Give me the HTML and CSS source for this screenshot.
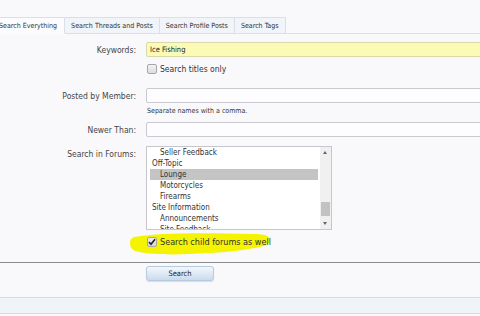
FILE: index.html
```html
<!DOCTYPE html>
<html>
<head>
<meta charset="utf-8">
<link rel="stylesheet" href="styles.css">
</head>
<body>
<div class="page">
  <ul class="tabs">
    <li class="tab active">Search Everything</li>
    <li class="tab">Search Threads and Posts</li>
    <li class="tab">Search Profile Posts</li>
    <li class="tab">Search Tags</li>
  </ul>

  <div class="form">
    <div class="row r-keywords">
      <div class="label">Keywords:</div>
      <div class="ctrl">
        <div class="input yellow">Ice Fishing</div>
        <div class="check"><span class="box"></span>Search titles only</div>
      </div>
    </div>

    <div class="row r-member">
      <div class="label">Posted by Member:</div>
      <div class="ctrl">
        <div class="input"></div>
        <div class="explain">Separate names with a comma.</div>
      </div>
    </div>

    <div class="row r-newer">
      <div class="label">Newer Than:</div>
      <div class="ctrl">
        <div class="input"></div>
      </div>
    </div>

    <div class="row r-forums">
      <div class="label">Search in Forums:</div>
      <div class="ctrl">
        <div class="listbox">
          <div class="items">
            <div class="item child">Seller Feedback</div>
            <div class="item">Off-Topic</div>
            <div class="item child selected">Lounge</div>
            <div class="item child">Motorcycles</div>
            <div class="item child">Firearms</div>
            <div class="item">Site Information</div>
            <div class="item child">Announcements</div>
            <div class="item child">Site Feedback</div>
          </div>
          <div class="scrollbar">
            <span class="arrow up"></span>
            <span class="track"><span class="thumb"></span></span>
            <span class="arrow down"></span>
          </div>
        </div>
        <div class="check child-check">
          <svg class="marker" width="146" height="26" viewBox="0 0 146 26"><path d="M5 6 C35 1 80 2 125 3 C136 3 141 5 141 9 C141 13 136 15 126 17 C110 20 90 22 60 23 C40 24 20 23 10 21 C4 20 1 17 1 12 C1 9 2 7 5 6 Z" fill="#f4f400"/></svg>
          <span class="box checked"><svg width="8" height="8" viewBox="0 0 8 8"><path d="M1 4 L3 6.3 L7 1.2" fill="none" stroke="#222" stroke-width="1.6"/></svg></span>
          <span class="ctext">Search child forums as well</span>
        </div>
      </div>
    </div>
  </div>

  <div class="submit">
    <div class="button">Search</div>
  </div>

  <div class="footer-band"></div>
</div>
</body>
</html>
```

FILE: styles.css
```css
* { box-sizing: border-box; }
html, body {
  margin: 0;
  padding: 0;
  width: 480px;
  height: 316px;
  overflow: hidden;
  background: #f9f9fc;
}
.page {
  font-family: "DejaVu Sans Condensed", "Liberation Sans", sans-serif;
  color: #333;
  padding-top: 17px;
}
.tabs {
  list-style: none;
  margin: 0 0 0 -11px;
  padding: 0;
  display: flex;
  height: 17px;
  border-bottom: 1px solid #d8e1ea;
}
.tab {
  height: 17px;
  padding: 0 6px;
  font-size: 7.05px;
  line-height: 16px;
  color: #333;
  background: #f1f5f9;
  border: 1px solid #d8e1ea;
  border-left: none;
  white-space: nowrap;
}
.tab:first-child { border-left: 1px solid #d8e1ea; padding-left: 9px; }
.tab.active {
  background: #fcfcfe;
  border-bottom-color: #fcfcfe;
  padding-right: 7px;
}

.form { padding-top: 8px; }
.row {
  display: flex;
  align-items: flex-start;
}
.label {
  width: 137px;
  flex: none;
  text-align: right;
  padding-right: 1px;
  font-size: 8.5px;
  line-height: 16px;
  height: 15px;
  color: #444;
}
.ctrl {
  margin-left: 9px;
  flex: none;
  width: 360px;
}
.input {
  height: 15px;
  border: 1px solid #c9c9cf;
  background: #fdfdff;
  font-size: 7.5px;
  line-height: 13px;
  padding-left: 3px;
  color: #222;
  border-radius: 2px 0 0 2px;
}
.input.yellow { background: #fbfbb6; border-color: #d8d8a8; }
.check {
  display: flex;
  align-items: center;
  font-size: 8.5px;
  line-height: 12px;
  color: #333;
  height: 12px;
}
.r-keywords .check { margin-top: 6px; margin-left: 1px; }
.box {
  width: 10px;
  height: 10px;
  border: 1px solid #a8a8a8;
  border-radius: 2px;
  background: linear-gradient(#f2f2f2, #dcdcdc);
  margin-right: 3px;
  flex: none;
  display: flex;
  align-items: center;
  justify-content: center;
}
.r-member { margin-top: 13px; }
.explain {
  font-size: 7px;
  color: #333;
  line-height: 16px;
  height: 19px;
  padding-left: 1px;
}
.r-forums { margin-top: 9px; }
.r-forums .label { line-height: 17px; height: 16px; }
.listbox {
  width: 186px;
  height: 84px;
  border: 1px solid #c6c6cc;
  background: #fff;
  display: flex;
  overflow: hidden;
}
.items {
  flex: 1;
  padding: 0 2px 0 3px;
  overflow: hidden;
}
.item {
  font-size: 8px;
  line-height: 11px;
  height: 11px;
  padding-left: 2px;
  color: #333;
  white-space: nowrap;
}
.item.child { padding-left: 10px; }
.item.selected { background: #c4c4c4; }
.scrollbar {
  width: 11px;
  flex: none;
  display: flex;
  flex-direction: column;
  background: #f0f0f0;
}
.arrow {
  height: 10px;
  flex: none;
  position: relative;
}
.arrow::after {
  content: "";
  position: absolute;
  left: 3px;
  top: 4px;
  border-left: 2.5px solid transparent;
  border-right: 2.5px solid transparent;
}
.arrow.up::after { border-bottom: 3px solid #666; }
.arrow.down::after { border-top: 3px solid #666; top: 3px; }
.track {
  flex: 1;
  display: flex;
  flex-direction: column;
  justify-content: flex-end;
  padding: 0 1px 3px;
}
.thumb {
  height: 14px;
  background: #c2c2c2;
}
.child-check {
  margin-top: 6px;
  margin-left: 1px;
  position: relative;
}
.marker {
  position: absolute;
  left: -18px;
  top: -5px;
}
.box.checked { position: relative; background: linear-gradient(#eeeeee, #d6d6d6); }
.ctext { position: relative; font-size: 9px; color: #333; }

.submit {
  margin-top: 14px;
  border-top: 1px solid #8a8a8a;
  padding: 3px 0 0 146px;
  height: 35px;
}
.button {
  width: 68px;
  height: 15px;
  border: 1px solid #b7c9dc;
  border-radius: 3px;
  background: linear-gradient(#f3f7fb, #c9dbee);
  font-size: 7.5px;
  line-height: 13px;
  text-align: center;
  color: #222;
  box-shadow: 0 1px 1px rgba(0,0,0,0.12);
}
.footer-band {
  height: 17px;
  border-top: 1px solid #d4dbe3;
  border-bottom: 1px solid #d4dbe3;
  background: #eef4f8;
}
```
